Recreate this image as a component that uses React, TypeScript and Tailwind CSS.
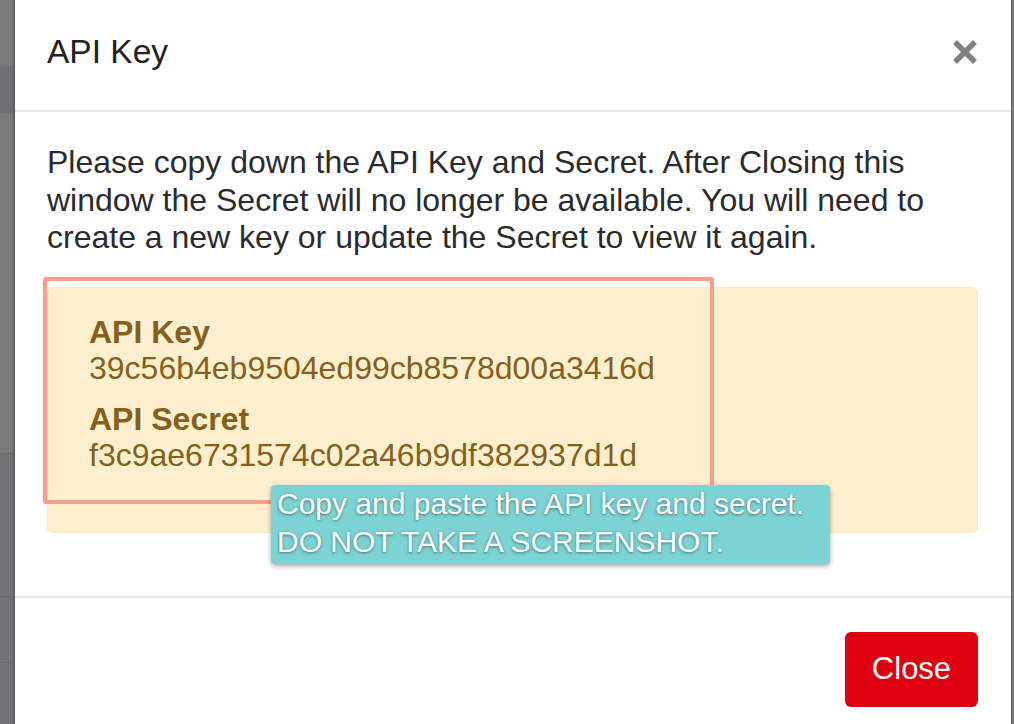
import React from "react";

export default function App() {
  return (
    <div className="relative flex h-[724px] w-[1014px] overflow-hidden bg-[#7a7a7a] font-['Liberation_Sans',Arial,sans-serif]">
      {/* backdrop strip (page behind overlay) */}
      <div className="flex w-[13px] shrink-0 flex-col">
        <div className="h-[66px] bg-[#7a7a7a]" />
        <div className="h-[47px] bg-[#6f7073]" />
        <div className="h-[341px] border-b border-[#6a6a6a] bg-[#7a7a7a]" />
        <div className="h-[143px] border-b border-[#6a6a6a] bg-[#727274]" />
        <div className="h-[66px] border-b border-[#6a6a6a] bg-[#727274]" />
        <div className="flex-1 bg-[#727274]" />
      </div>

      {/* modal */}
      <div className="flex min-w-0 flex-1 flex-col border-l-2 border-r border-[#5e5e5e] bg-white">
        <div className="flex h-[112px] shrink-0 items-start justify-between border-b-2 border-[#e5e5e5] pl-[32px] pr-[33px] pt-[32px]">
          <h4 className="text-[33.5px] leading-[40px] text-[#222]">API Key</h4>
          <svg width="26" height="24" viewBox="0 0 26 24" className="mt-[8px]">
            <path d="M3 2 L23 22 M23 2 L3 22" stroke="#7f7f7f" strokeWidth="5.5" strokeLinecap="butt" />
          </svg>
        </div>

        <div className="flex flex-col pl-[32px] pr-[33px] pt-[32px] pb-[63px]">
          <p className="text-[32px] leading-[37.5px] text-[#2b2b2b]">
            Please copy down the API Key and Secret. After Closing this window the Secret will no longer be available. You will need to create a new key or update the Secret to view it again.
          </p>
          <div className="mt-[30px] box-border h-[246px] rounded-[6px] border border-[#fce8b2] bg-[#fef0cf] pl-[41px] pt-[26px] text-[32px] leading-[36px] text-[#86601b]">
            <div className="font-bold">API Key</div>
            <div>39c56b4eb9504ed99cb8578d00a3416d</div>
            <div className="mt-[15px] font-bold">API Secret</div>
            <div>f3c9ae6731574c02a46b9df382937d1d</div>
          </div>
        </div>

        <div className="flex justify-end border-t-2 border-[#e5e5e5] pr-[33px] pt-[34px]">
          <button className="flex h-[75px] w-[133px] items-center justify-center rounded-[6px] bg-[#df0010] text-[31px] text-white">
            Close
          </button>
        </div>
      </div>
      <div className="w-[2px] shrink-0 bg-[#7a7a7a]" />

      {/* annotation overlay */}
      <div className="absolute left-[43px] top-[277px] h-[227px] w-[671px] rounded-[3px] border-4 border-[#ff9b8b]" />
      <div className="absolute left-[271px] top-[485px] h-[79px] w-[559px] rounded-[4px] bg-[#7bd3d4] pl-[6px] text-[30px] leading-[38px] text-white shadow-[0_2px_5px_rgba(0,0,0,0.35)] [text-shadow:0_1px_3px_rgba(0,0,0,0.45)]">
        <div>Copy and paste the API key and secret.</div>
        <div>DO NOT TAKE A SCREENSHOT.</div>
      </div>
    </div>
  );
}
